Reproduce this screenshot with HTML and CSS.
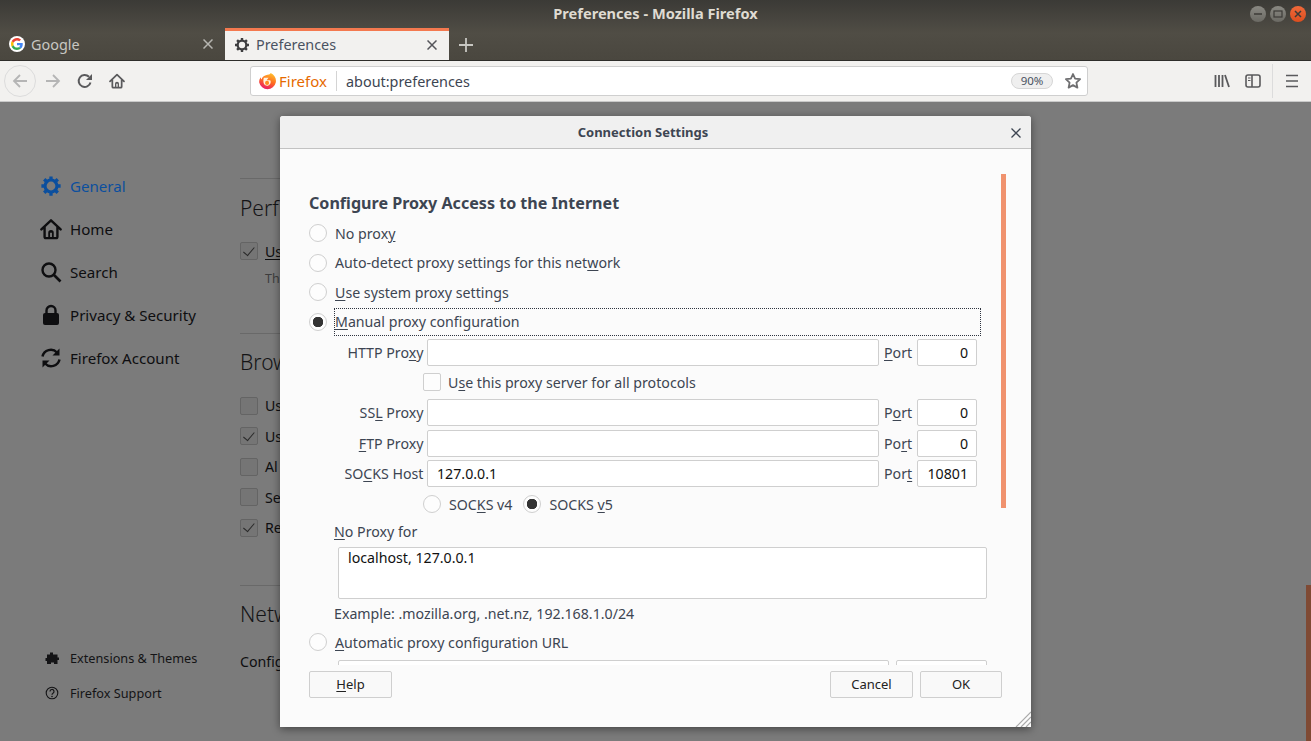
FILE: index.html
```html
<!DOCTYPE html>
<html lang="en">
<head>
    <meta charset="UTF-8">
    <meta name="viewport" content="width=device-width, initial-scale=1.0">
    <title>Preferences - Mozilla Firefox</title>
    <link rel="stylesheet" href="styles.css">
</head>
<body>
    <svg class="sprites" width="0" height="0">
        <symbol id="gear" viewBox="0 0 24 24">
            <circle cx="12" cy="12" r="6.5" fill="none" stroke="currentColor" stroke-width="3.4"/>
            <path d="M12 1.5v4M12 18.5v4M1.5 12h4M18.5 12h4M4.6 4.6l2.8 2.8M16.6 16.6l2.8 2.8M4.6 19.4l2.8-2.8M16.6 7.4l2.8-2.8" stroke="currentColor" stroke-width="3.6" fill="none"/>
        </symbol>
        <symbol id="home" viewBox="0 0 24 24">
            <path d="M1.5 12.5 12 2.5l10.500 10M5 10v10.500a1.500 1.500 0 0 0 1.500 1.500h11a1.500 1.500 0 0 0 1.500-1.500V10" fill="none" stroke="currentColor" stroke-width="2.6" stroke-linejoin="round" stroke-linecap="round"/>
            <path d="M9 22v-6a3 3 0 0 1 6 0v6h-2v-6h-2v6z" fill="currentColor"/>
        </symbol>
    </svg>

    <header class="titlebar">
        <div class="window-title">Preferences - Mozilla Firefox</div>
        <div class="window-buttons">
            <span class="win-btn">
                <svg width="16" height="16" viewBox="0 0 16 16"><path d="M4 8h8" stroke="#3c3b37" stroke-width="1.500"/></svg>
            </span>
            <span class="win-btn">
                <svg width="16" height="16" viewBox="0 0 16 16"><rect x="4" y="5" width="8" height="6" fill="none" stroke="#3c3b37" stroke-width="1.200"/></svg>
            </span>
            <span class="win-btn win-close">
                <svg width="16" height="16" viewBox="0 0 16 16"><path d="M5 5l6 6M11 5l-6 6" stroke="#3c3b37" stroke-width="1.500"/></svg>
            </span>
        </div>
        <div class="tabs">
            <div class="tab">
                <span class="favicon-google">
                    <svg width="12" height="12" viewBox="0 0 48 48">
                        <path fill="#EA4335" d="M24 9.500c3.540 0 6.710 1.220 9.210 3.600l6.850-6.850C35.900 2.380 30.470 0 24 0 14.620 0 6.510 5.380 2.560 13.220l7.980 6.190C12.430 13.720 17.740 9.500 24 9.500z"/>
                        <path fill="#4285F4" d="M46.980 24.550c0-1.570-.15-3.090-.38-4.550H24v9.020h12.940c-.58 2.960-2.260 5.480-4.780 7.180l7.730 6c4.510-4.180 7.090-10.360 7.090-17.650z"/>
                        <path fill="#FBBC05" d="M10.530 28.590c-.48-1.450-.76-2.990-.76-4.590s.27-3.140.76-4.590l-7.980-6.190C.92 16.460 0 20.120 0 24c0 3.880.92 7.540 2.560 10.780l7.970-6.190z"/>
                        <path fill="#34A853" d="M24 48c6.480 0 11.930-2.130 15.890-5.810l-7.730-6c-2.150 1.450-4.920 2.300-8.160 2.300-6.260 0-11.570-4.220-13.470-9.910l-7.980 6.190C6.510 42.620 14.620 48 24 48z"/>
                    </svg>
                </span>
                <span class="tab-label">Google</span>
                <svg class="tab-close" width="10" height="10" viewBox="0 0 10 10"><path d="M.5.500l9 9M9.500.500l-9 9" stroke="currentColor" stroke-width="1.500"/></svg>
            </div>
            <div class="tab tab-active">
                <svg class="tab-gear" width="16" height="16"><use href="#gear"/></svg>
                <span class="tab-label">Preferences</span>
                <svg class="tab-close" width="10" height="10" viewBox="0 0 10 10"><path d="M.5.500l9 9M9.500.500l-9 9" stroke="currentColor" stroke-width="1.500"/></svg>
            </div>
            <svg class="new-tab" width="14" height="14" viewBox="0 0 14 14"><path d="M7 0v14M0 7h14" stroke="currentColor" stroke-width="1.800"/></svg>
        </div>
    </header>

    <nav class="toolbar">
        <span class="back-btn">
            <svg width="16" height="16" viewBox="0 0 16 16"><path d="M15 8H2M8 2 2 8l6 6" fill="none" stroke="#b5b5b5" stroke-width="1.800"/></svg>
        </span>
        <svg class="forward-icon" width="16" height="16" viewBox="0 0 16 16"><path d="M1 8h13M8 2l6 6-6 6" fill="none" stroke="#b5b5b5" stroke-width="1.800"/></svg>
        <svg class="reload-icon" width="16" height="16" viewBox="0 0 16 16"><path d="M13.500 9.500A6 6 0 1 1 12 3.800" fill="none" stroke="#5a5a5c" stroke-width="2"/><path d="M15 1v6H9z" fill="#5a5a5c"/></svg>
        <svg class="home-icon" width="16" height="16"><use href="#home"/></svg>

        <div class="urlbar">
            <svg class="fx-logo" width="17" height="17" viewBox="0 0 16 16">
                <defs>
                    <linearGradient id="fx" x1="0.700" y1="0" x2="0.300" y2="1">
                        <stop offset="0" stop-color="#ffc02e"/>
                        <stop offset="0.500" stop-color="#ff6a1f"/>
                        <stop offset="1" stop-color="#e8186e"/>
                    </linearGradient>
                </defs>
                <path d="M11 0C15 2 16.500 5.500 15.800 9A8 8 0 0 1 .2 9C0 7 .6 5.300 1.800 4c-.1 1 .1 1.500.6 2C3 3.500 5 2.500 6.500 2 8.500 1.500 10.500 1.500 11 0z" fill="url(#fx)"/>
                <path d="M4.500 4.500h4.500L7.200 6.800h3.400a3.400 3.400 0 1 1-6.300 2.300C4 7.500 4 6 4.500 4.500z" fill="#fff4e0"/>
                <circle cx="7.600" cy="9.300" r="1.900" fill="#ff8a1f"/>
            </svg>
            <span class="fx-name">Firefox</span>
            <span class="url-sep"></span>
            <span class="url-text">about:preferences</span>
            <span class="zoom-pill">90%</span>
            <svg class="star-icon" width="18" height="18" viewBox="0 0 18 18"><path d="M9 2l2.100 4.600 5 .6-3.700 3.400 1 5L9 13.100 4.600 15.600l1-5L1.900 7.200l5-.6z" fill="none" stroke="#6f6f71" stroke-width="1.800" stroke-linejoin="round"/></svg>
        </div>

        <svg class="library-icon" width="16" height="16" viewBox="0 0 16 16"><path d="M1.500 2v12M5 2v12M8.500 2v12M11 2l4 12" stroke="#5a5a5c" stroke-width="1.800" fill="none"/></svg>
        <svg class="sidebar-icon" width="16" height="16" viewBox="0 0 16 16"><rect x="1" y="2" width="14" height="12" rx="2" fill="none" stroke="#5a5a5c" stroke-width="1.600"/><path d="M7 2v12" stroke="#5a5a5c" stroke-width="1.600"/><path d="M3 5h2.500M3 7.500h2.500" stroke="#5a5a5c"/></svg>
        <span class="toolbar-sep"></span>
        <svg class="menu-icon" width="12" height="14" viewBox="0 0 12 14"><path d="M0 1.500h12M0 7h12M0 12.500h12" stroke="#5a5a5c" stroke-width="1.600"/></svg>
    </nav>

    <div class="content">
        <aside class="sidebar">
            <a class="side-item side-active">
                <svg width="22" height="22"><use href="#gear"/></svg>General
            </a>
            <a class="side-item">
                <svg width="22" height="22"><use href="#home"/></svg>Home
            </a>
            <a class="side-item">
                <svg width="22" height="22" viewBox="0 0 22 22"><circle cx="9" cy="9" r="6.500" fill="none" stroke="currentColor" stroke-width="2.400"/><path d="M13.500 13.500l7 7" stroke="currentColor" stroke-width="2.600"/></svg>Search
            </a>
            <a class="side-item">
                <svg width="22" height="22" viewBox="0 0 22 22"><rect x="3" y="9" width="16" height="12" rx="2" fill="currentColor"/><path d="M6.500 10V6.500a4.500 4.500 0 0 1 9 0V10" fill="none" stroke="currentColor" stroke-width="2.400"/></svg>Privacy &amp; Security
            </a>
            <a class="side-item">
                <svg width="22" height="22" viewBox="0 0 22 22"><path d="M2.500 9.500A8.500 8.500 0 0 1 17 5.500" fill="none" stroke="currentColor" stroke-width="2.500"/><path d="M19.500 1.500v7h-7z" fill="currentColor"/><path d="M19.500 12.500A8.500 8.500 0 0 1 5 16.500" fill="none" stroke="currentColor" stroke-width="2.500"/><path d="M2.500 20.500v-7h7z" fill="currentColor"/></svg>Firefox Account
            </a>
            <a class="side-link side-link-first">
                <svg width="16" height="16" viewBox="0 0 16 16"><path d="M6 2.500h3v2h4.500v3H15v2.500h-1.500V14H10v-1.500H7V14H3v-3H1.500V8H3V4.500h3z" fill="currentColor"/></svg>Extensions &amp; Themes
            </a>
            <a class="side-link">
                <svg width="16" height="16" viewBox="0 0 16 16"><circle cx="8" cy="8" r="5.800" fill="none" stroke="currentColor" stroke-width="1.100"/><path d="M6 6.500a2 2 0 1 1 3 1.700c-.7.400-1 .8-1 1.600" fill="none" stroke="currentColor" stroke-width="1.200"/><circle cx="8" cy="11.500" r=".8" fill="currentColor"/></svg>Firefox Support
            </a>
        </aside>

        <main class="prefs">
            <section class="pref-section">
                <h2>Perf</h2>
                <div class="pref-check"><span class="page-box is-checked"></span><span class="pref-label"><span class="key">Us</span></span></div>
                <p class="pref-note">Th</p>
            </section>
            <section class="pref-section pref-browsing">
                <h2>Brow</h2>
                <div class="pref-check"><span class="page-box"></span><span class="pref-label">Us</span></div>
                <div class="pref-check"><span class="page-box is-checked"></span><span class="pref-label">Us</span></div>
                <div class="pref-check"><span class="page-box"></span><span class="pref-label">Al</span></div>
                <div class="pref-check"><span class="page-box"></span><span class="pref-label">Se</span></div>
                <div class="pref-check"><span class="page-box is-checked"></span><span class="pref-label">Re</span></div>
            </section>
            <section class="pref-section pref-network">
                <h2>Netw</h2>
                <p class="pref-config">Config</p>
            </section>
        </main>
        <div class="page-scrollbar"></div>
    </div>

    <div class="dialog">
        <div class="dialog-head">
            <span>Connection Settings</span>
            <svg class="dialog-close" width="10" height="10" viewBox="0 0 10 10"><path d="M.5.500l9 9M9.500.500l-9 9" stroke="#3d4552" stroke-width="1.300"/></svg>
        </div>

        <div class="dialog-body">
            <h3>Configure Proxy Access to the Internet</h3>
            <label class="radio-row"><input class="radio" type="radio" name="proxy"><span>No prox<span class="key">y</span></span></label>
            <label class="radio-row"><input class="radio" type="radio" name="proxy"><span>Auto-detect proxy settings for this net<span class="key">w</span>ork</span></label>
            <label class="radio-row"><input class="radio" type="radio" name="proxy"><span><span class="key">U</span>se system proxy settings</span></label>
            <label class="radio-row"><input class="radio" type="radio" name="proxy" checked><span class="focused"><span class="key">M</span>anual proxy configuration</span></label>

            <div class="proxy-grid">
                <div class="proxy-row">
                    <label class="proxy-label">HTTP Pro<span class="key">x</span>y</label>
                    <input class="field host-field" type="text">
                    <label class="port-label"><span class="key">P</span>ort</label>
                    <input class="field port-field" type="text" value="0">
                </div>
                <label class="all-row"><input class="check" type="checkbox"><span>U<span class="key">s</span>e this proxy server for all protocols</span></label>
                <div class="proxy-row row-ssl">
                    <label class="proxy-label">SS<span class="key">L</span> Proxy</label>
                    <input class="field host-field" type="text">
                    <label class="port-label">P<span class="key">o</span>rt</label>
                    <input class="field port-field" type="text" value="0">
                </div>
                <div class="proxy-row row-ftp">
                    <label class="proxy-label"><span class="key">F</span>TP Proxy</label>
                    <input class="field host-field" type="text">
                    <label class="port-label">Po<span class="key">r</span>t</label>
                    <input class="field port-field" type="text" value="0">
                </div>
                <div class="proxy-row row-socks">
                    <label class="proxy-label">SO<span class="key">C</span>KS Host</label>
                    <input class="field host-field" type="text" value="127.0.0.1">
                    <label class="port-label">Por<span class="key">t</span></label>
                    <input class="field port-field" type="text" value="10801">
                </div>
                <div class="socks-row">
                    <label class="socks-opt"><input class="radio" type="radio" name="socks"><span>SOC<span class="key">K</span>S v4</span></label>
                    <label class="socks-opt"><input class="radio" type="radio" name="socks" checked><span>SOCKS <span class="key">v</span>5</span></label>
                </div>
                <div class="noproxy-label"><span class="key">N</span>o Proxy for</div>
                <textarea class="noproxy-box">localhost, 127.0.0.1</textarea>
                <div class="example">Example: .mozilla.org, .net.nz, 192.168.1.0/24</div>
            </div>

            <label class="radio-row auto-row"><input class="radio" type="radio" name="proxy"><span><span class="key">A</span>utomatic proxy configuration URL</span></label>
            <div class="auto-fields">
                <input class="field auto-url" type="text">
                <input class="field auto-reload" type="text">
            </div>
            <div class="scroll-thumb"></div>
        </div>

        <div class="dialog-foot">
            <button class="btn"><span class="key">H</span>elp</button>
            <span class="foot-space"></span>
            <button class="btn">Cancel</button>
            <button class="btn btn-ok">OK</button>
        </div>

        <svg class="grip" width="16" height="16" viewBox="0 0 16 16"><path d="M1 16 16 1M6 16 16 6M11 16l5-5" stroke="#a9a9a9" stroke-width="1.200"/></svg>
    </div>
</body>
</html>
```

FILE: styles.css
```css
* {
    box-sizing: border-box;
}

html, body {
    margin: 0;
    height: 100%;
}

body {
    width: 1311px;
    height: 741px;
    overflow: hidden;
    display: flex;
    flex-direction: column;
    font-family: "Noto Sans", "Open Sans", sans-serif;
    font-size: 14.2px;
    background-color: #7b7b7b;
    color: #3d4552;
    position: relative;
}

.sprites {
    position: absolute;
}

.key {
    text-decoration: underline;
    text-underline-offset: 2px;
    text-decoration-thickness: 1px;
}

/* window title and tabs */
.titlebar {
    height: 61px;
    flex: none;
    background: linear-gradient(#3b3a36, #504d45 55%, #4a473f);
    border-bottom: 1px solid #2e2d2a;
    position: relative;
    display: flex;
    flex-direction: column;
    justify-content: flex-end;
}

.window-title {
    position: absolute;
    left: 0;
    right: 0;
    top: 4px;
    text-align: center;
    font-size: 14.6px;
    font-weight: 700;
    color: #dfdbd2;
    line-height: 18px;
}

.window-buttons {
    position: absolute;
    top: 6px;
    right: 5px;
    display: flex;
    gap: 4px;
}

.win-btn {
    width: 16px;
    height: 16px;
    border-radius: 50%;
    background: linear-gradient(#8a8983, #6a6963);
    display: flex;
}

.win-close {
    background: linear-gradient(#f0693a, #dc4e1f);
}

.tabs {
    display: flex;
    height: 32px;
    align-items: stretch;
}

.tab {
    width: 225px;
    display: flex;
    align-items: center;
    padding: 0 12px 0 9px;
    color: #c8c7c2;
    font-size: 14.4px;
}

.tab-active {
    width: 224px;
    background-color: #f2f1ef;
    border-top: 3px solid #f4794f;
    color: #4a5261;
    padding: 0 12px 2px 9px;
}

.favicon-google {
    width: 16px;
    height: 16px;
    border-radius: 50%;
    background-color: #fff;
    display: flex;
    align-items: center;
    justify-content: center;
    margin-right: 6px;
}

.tab-gear {
    color: #3e3e40;
    margin-right: 6px;
}

.tab-label {
    flex: 1;
}

.tab-close {
    color: #b6b5b0;
}

.tab-active .tab-close {
    color: #55555a;
}

.new-tab {
    color: #c8c7c2;
    margin: 10px 0 0 10px;
}

/* navigation toolbar */
.toolbar {
    height: 41px;
    flex: none;
    background-color: #f2f1ef;
    border-bottom: 1px solid #c9c9c9;
    display: flex;
    align-items: center;
    padding-left: 4px;
}

.back-btn {
    width: 32px;
    height: 32px;
    border: 1px solid #dcdcdc;
    border-radius: 50%;
    display: flex;
    align-items: center;
    justify-content: center;
}

.forward-icon {
    margin-left: 9px;
}

.reload-icon {
    margin-left: 16px;
}

.home-icon {
    margin-left: 16px;
    color: #5a5a5c;
}

.urlbar {
    width: 838px;
    height: 30px;
    margin-left: 125px;
    background-color: #fff;
    border: 1px solid #cfcfcf;
    border-radius: 3px;
    display: flex;
    align-items: center;
    padding: 0 5px 0 8px;
    font-size: 14.4px;
}

.fx-name {
    color: #e66a00;
    margin-left: 3px;
    width: 48px;
    font-size: 15px;
}

.url-sep {
    width: 1px;
    height: 20px;
    background-color: #d4d4d4;
    margin: 0 9px;
}

.url-text {
    flex: 1;
    color: #3d4552;
}

.zoom-pill {
    width: 42px;
    height: 16px;
    border: 1px solid #d6d6d6;
    border-radius: 8px;
    background-color: #efefef;
    font-size: 11.5px;
    line-height: 14px;
    text-align: center;
    color: #4a5261;
}

.library-icon {
    margin-left: 126px;
}

.sidebar-icon {
    margin-left: 15px;
}

.toolbar-sep {
    width: 1px;
    height: 34px;
    background-color: #dcdcdc;
    margin-left: 11px;
}

.menu-icon {
    margin-left: 13px;
}

.star-icon {
    margin-left: 11px;
}

/* dimmed preferences page */
.content {
    flex: 1;
    display: flex;
    min-height: 0;
    position: relative;
    color: #0e0e10;
}

.sidebar {
    width: 240px;
    padding: 62px 0 31px 40px;
    display: flex;
    flex-direction: column;
}

.side-item {
    height: 43px;
    display: flex;
    align-items: center;
    gap: 8px;
    font-size: 15.1px;
}

.side-active {
    color: #0b4f9e;
}

.side-link {
    height: 35px;
    display: flex;
    align-items: center;
    gap: 10px;
    padding-left: 4px;
    font-size: 12.7px;
    color: #141416;
}

.side-link-first {
    margin-top: auto;
}

.prefs {
    width: 60px;
    padding-top: 76px;
    white-space: nowrap;
}

.pref-section {
    border-top: 1px solid #696969;
}

.pref-section h2 {
    margin: 15px 0 0;
    font-size: 21px;
    font-weight: 300;
    line-height: 28px;
    color: #141416;
}

.pref-check {
    display: flex;
    align-items: center;
    height: 30.5px;
    gap: 7px;
}

.pref-section h2 + .pref-check {
    margin-top: 14px;
}

.page-box {
    width: 18px;
    height: 18px;
    flex: none;
    border: 1px solid #646464;
    border-radius: 2px;
    background-color: #757575;
    display: flex;
    align-items: center;
    justify-content: center;
}

.is-checked::after {
    content: "";
    width: 5px;
    height: 10px;
    border: solid #2a2a2a;
    border-width: 0 1.5px 1.5px 0;
    transform: rotate(40deg) translate(-1px, -1px);
}

.pref-note {
    margin: 0 0 0 25px;
    color: #3d3d3d;
    font-size: 12.5px;
    line-height: 17px;
    padding-top: 3px;
    height: 66px;
}

.pref-browsing {
    height: 252px;
}

.pref-browsing h2 {
    margin-top: 14px;
}

.pref-browsing h2 + .pref-check {
    margin-top: 15px;
}

.pref-network h2 {
    margin-top: 14px;
}

.pref-config {
    margin: 24px 0 0;
    font-size: 14.2px;
}

.page-scrollbar {
    position: absolute;
    right: 0;
    top: 483px;
    width: 5px;
    bottom: 0;
    background-color: #7f4a34;
}

/* connection settings dialog */
.dialog {
    position: absolute;
    left: 280px;
    top: 116px;
    width: 751px;
    height: 611px;
    background-color: #fbfbfb;
    border-radius: 3px 3px 0 0;
    box-shadow: 0 2px 8px rgba(0, 0, 0, 0.45);
    display: flex;
    flex-direction: column;
}

.dialog-head {
    height: 33px;
    flex: none;
    background-color: #f0f0f0;
    border-bottom: 1px solid #c2c2c2;
    border-radius: 3px 3px 0 0;
    display: flex;
    align-items: center;
    justify-content: center;
    padding-right: 25px;
    font-size: 13px;
    font-weight: 700;
    color: #3d4552;
    position: relative;
}

.dialog-close {
    position: absolute;
    right: 10px;
    top: 12px;
}

.dialog-body {
    height: 516px;
    flex: none;
    padding: 44px 0 0 29px;
    overflow: hidden;
    position: relative;
}

.dialog-body h3 {
    margin: 0 0 5.5px;
    font-size: 16.1px;
    font-weight: 700;
    line-height: 20px;
}

.radio-row {
    height: 29.5px;
    display: flex;
    align-items: center;
    gap: 8px;
}

.radio {
    appearance: none;
    flex: none;
    margin: 0;
    width: 18px;
    height: 18px;
    border: 1px solid #cfcfcf;
    border-radius: 50%;
    background-color: #fdfdfd;
}

.radio:checked {
    background: radial-gradient(circle, #333 5px, #fdfdfd 5.5px);
}

.check {
    appearance: none;
    flex: none;
    margin: 0;
    width: 18px;
    height: 18px;
    border: 1px solid #cfcfcf;
    border-radius: 2px;
    background-color: #fdfdfd;
}

.focused {
    width: 647px;
    height: 28px;
    line-height: 26px;
    margin-left: -1px;
    border: 1px dotted #2e3440;
}

.proxy-grid {
    margin: 2px 0 0 25px;
}

.proxy-row {
    display: flex;
    align-items: center;
    height: 27px;
}

.row-ssl {
    margin-top: 8px;
}

.row-ftp {
    margin-top: 4px;
}

.row-socks {
    margin-top: 3px;
}

.proxy-label {
    width: 89.5px;
    text-align: right;
    margin-right: 3.5px;
}

.field {
    height: 27px;
    border: 1px solid #cfcfcf;
    border-radius: 2px;
    background-color: #fff;
    font-family: inherit;
    font-size: 14.2px;
    color: #111;
    outline: none;
}

.host-field {
    width: 452px;
    padding: 0 9px;
}

.port-label {
    width: 30px;
    margin: 0 3px 0 5px;
    white-space: nowrap;
}

.port-field {
    width: 60px;
    text-align: right;
    padding: 0 8px;
}

.all-row {
    display: flex;
    align-items: center;
    gap: 7px;
    height: 18px;
    margin: 7.5px 0 0 89px;
}

.socks-row {
    display: flex;
    gap: 11px;
    margin: 8px 0 0 89px;
    height: 18px;
}

.socks-opt {
    display: flex;
    align-items: center;
    gap: 8px;
}

.noproxy-label {
    margin-top: 8.5px;
    line-height: 20px;
}

.noproxy-box {
    display: block;
    width: 649px;
    height: 52px;
    margin: 5px 0 0 4px;
    padding: 0 9px;
    border: 1px solid #cfcfcf;
    border-radius: 2px;
    background-color: #fff;
    font-family: inherit;
    font-size: 14.2px;
    color: #111;
    resize: none;
    outline: none;
}

.example {
    margin-top: 5px;
    line-height: 20px;
}

.auto-row {
    margin-top: 4px;
}

.auto-fields {
    display: flex;
    gap: 7px;
    margin: 3px 0 0 29px;
}

.auto-url {
    width: 551px;
}

.auto-reload {
    width: 91px;
}

.scroll-thumb {
    position: absolute;
    left: 721px;
    top: 25px;
    width: 5px;
    height: 334px;
    background-color: #f0926e;
}

.dialog-foot {
    flex: none;
    display: flex;
    gap: 7px;
    padding: 6px 29px 0;
}

.foot-space {
    flex: 1;
}

.btn {
    width: 83px;
    height: 27px;
    padding: 0 0 2px;
    border: 1px solid #cfcfcf;
    border-radius: 2px;
    background-color: #f9f9f9;
    font-family: inherit;
    font-size: 13px;
    color: #222;
}

.btn-ok {
    width: 82px;
}

.grip {
    position: absolute;
    right: 0;
    bottom: 0;
}
```
